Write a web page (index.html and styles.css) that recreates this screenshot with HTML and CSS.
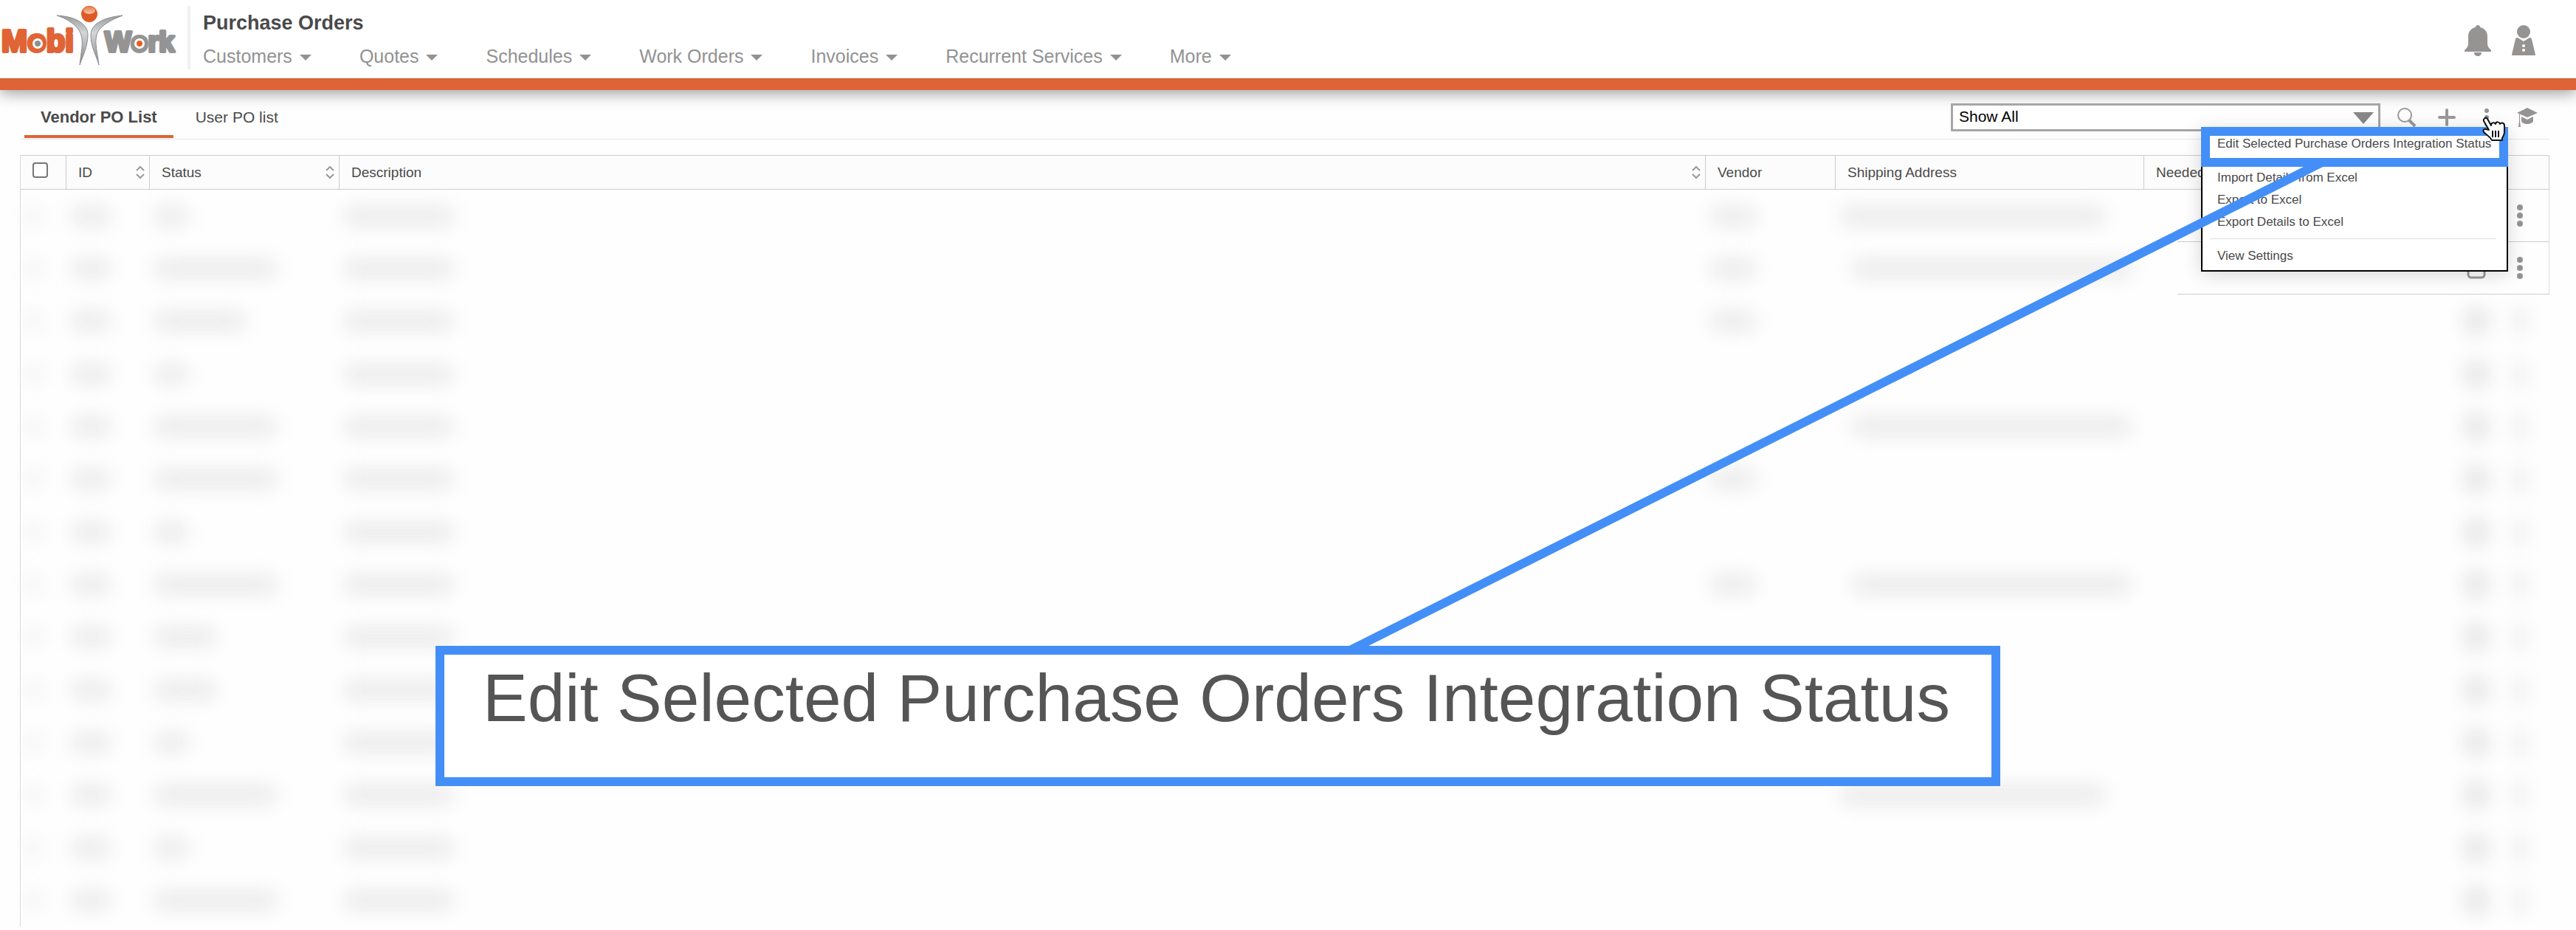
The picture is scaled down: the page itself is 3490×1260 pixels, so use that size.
FILE: index.html
```html
<!DOCTYPE html>
<html lang="en">
<head>
    <meta charset="UTF-8">
    <meta name="viewport" content="width=device-width, initial-scale=1.0">
    <title>Purchase Orders</title>
    <link rel="stylesheet" href="styles.css">
</head>
<body>
    <header class="header">
        <a class="logo" href="#" aria-label="MobiWork">
            <svg width="240" height="92" viewBox="0 0 240 92">
                <defs>
                    <linearGradient id="arm" x1="0" y1="0" x2="0" y2="1">
                        <stop offset="0" stop-color="#9a9a9a"/>
                        <stop offset="0.35" stop-color="#d4d6d8"/>
                        <stop offset="1" stop-color="#85888b"/>
                    </linearGradient>
                    <linearGradient id="shine" x1="0" y1="0" x2="0" y2="1">
                        <stop offset="0" stop-color="#e8814f"/>
                        <stop offset="1" stop-color="#f6c6a6"/>
                    </linearGradient>
                </defs>
                <text class="logo-mobi" x="2" y="70">Mobi</text>
                <text class="logo-work" x="142" y="70">Work</text>
                <circle cx="51" cy="59" r="7" fill="#fff"/>
                <circle cx="51" cy="59" r="4" fill="#8f8f8f"/>
                <circle cx="189" cy="59" r="7" fill="#fff"/>
                <circle cx="189" cy="59" r="4" fill="#e8601f"/>
                <path d="M77 21C98 22 119 30 119 47C119 63 112 76 108 88C110 70 113 58 110 48C107 36 93 26 77 21Z" fill="url(#arm)" stroke="#8a8c8e"/>
                <path d="M166 21C145 23 123 30 123 48C123 64 131 76 134 88C132 72 128 58 131 47C134 36 150 27 166 21Z" fill="url(#arm)" stroke="#8a8c8e"/>
                <circle cx="121" cy="19" r="11" fill="#dd5a26"/>
                <ellipse cx="121" cy="14" rx="8" ry="5" fill="url(#shine)"/>
            </svg>
        </a>
        <div class="header-main">
            <h1>Purchase Orders</h1>
            <nav class="menu">
                <a href="#">Customers</a>
                <a href="#">Quotes</a>
                <a href="#">Schedules</a>
                <a href="#">Work Orders</a>
                <a href="#">Invoices</a>
                <a href="#">Recurrent Services</a>
                <a href="#">More</a>
            </nav>
        </div>
        <div class="header-icons">
            <button class="icon-button" aria-label="Notifications">
                <svg width="36" height="42" viewBox="0 0 36 42">
                    <path d="M18 0a3 3 0 0 1 3 3c6 1 10 6 10 12v10c0 4 2 6 5 9v2H0v-2c3-3 5-5 5-9V15C5 9 9 4 15 3a3 3 0 0 1 3-3z"/>
                    <path d="M13 37h10c0 3-2 5-5 5s-5-2-5-5z"/>
                </svg>
            </button>
            <button class="icon-button" aria-label="Account">
                <svg width="32" height="42" viewBox="0 0 32 42">
                    <circle cx="16" cy="9" r="9"/>
                    <path d="M8 17l8 5 8-5c2 0 3 1 3 2l5 21c0 1 0 1-1 1H1c-1 0-1 0-1-1l5-21c0-1 1-2 3-2z"/>
                    <circle cx="16" cy="28" r="2" fill="#fff"/>
                    <circle cx="16" cy="34" r="2" fill="#fff"/>
                </svg>
            </button>
        </div>
    </header>

    <main class="container">
        <div class="toolbar">
            <div class="tabs">
                <a class="tab active" href="#">Vendor PO List</a>
                <a class="tab" href="#">User PO list</a>
            </div>
            <div class="tools">
                <div class="filter">
                    <select aria-label="Filter">
                        <option>Show All</option>
                    </select>
                    <svg class="filter-arrow" width="28" height="16" viewBox="0 0 28 16"><path d="M0 0h28L14 16z"/></svg>
                </div>
                <button class="icon-button" aria-label="Search">
                    <svg width="28" height="28" viewBox="0 0 28 28">
                        <circle cx="11" cy="11" r="9" fill="none" stroke="#999" stroke-width="2"/>
                        <path d="M17 18l8 8" stroke="#999" stroke-width="4"/>
                    </svg>
                </button>
                <button class="icon-button" aria-label="Add">
                    <svg width="24" height="24" viewBox="0 0 24 24"><path d="M12 2v20M2 12h20" stroke="#999" stroke-width="4" stroke-linecap="round"/></svg>
                </button>
                <div class="more">
                    <button class="icon-button" aria-label="More actions">
                        <svg width="8" height="26" viewBox="0 0 8 26"><circle cx="4" cy="4" r="3"/><circle cx="4" cy="13" r="3"/><circle cx="4" cy="22" r="3"/></svg>
                    </button>
                    <div class="dropdown">
                        <a href="#" class="selected">Edit Selected Purchase Orders Integration Status</a>
                        <a href="#">Import Details from Excel</a>
                        <a href="#">Export to Excel</a>
                        <a href="#">Export Details to Excel</a>
                        <hr>
                        <a href="#">View Settings</a>
                    </div>
                </div>
                <button class="icon-button" aria-label="Training">
                    <svg width="30" height="28" viewBox="0 0 30 28">
                        <path d="M15 1L29 8l-14 6L1 8z"/>
                        <path d="M7 13l8 4 8-4v6c0 2-4 4-8 4s-8-2-8-4z"/>
                        <path d="M5 10v9l1 8H3l1-8V9z"/>
                    </svg>
                </button>
            </div>
        </div>

        <table class="orders">
            <colgroup>
                <col class="col-check">
                <col class="col-id">
                <col class="col-status">
                <col>
                <col class="col-vendor">
                <col class="col-address">
                <col class="col-needed">
                <col class="col-select">
                <col class="col-actions">
            </colgroup>
            <thead>
                <tr>
                    <th><input type="checkbox" aria-label="Select all"></th>
                    <th class="sortable">ID</th>
                    <th class="sortable">Status</th>
                    <th class="sortable">Description</th>
                    <th>Vendor</th>
                    <th>Shipping Address</th>
                    <th class="plain">Needed</th>
                    <th class="plain"></th>
                    <th class="plain"></th>
                </tr>
            </thead>
            <tbody id="orderRows"></tbody>
        </table>
    </main>

    <svg class="pointer-line" viewBox="0 0 3490 1260" preserveAspectRatio="none">
        <path d="M3144 221L1831 880" stroke="#438ff7" stroke-width="12"/>
    </svg>
    <div class="callout">Edit Selected Purchase Orders Integration Status</div>
    <svg class="cursor" width="32" height="34" viewBox="0 0 32 34">
        <path d="M2 6C1 3 5 0 7 3l5 9c0-4 4-5 6-2 1-4 5-3 6 0 2-3 6-1 6 2v9c0 4-2 6-3 8v3H13c-2-5-6-6-10-10-3-3-1-6 2-5l4 1z" fill="#fff" stroke="#111" stroke-width="2" stroke-linejoin="round"/>
        <path d="M14 19v9M18 19v9M22 19v9" stroke="#111" stroke-width="2"/>
    </svg>

    <script>
        // status length, vendor set, address length
        const rows = [
            ['short', true, 'start'],
            ['long', true, 'wide'],
            ['medium', true, ''],
            ['short', false, ''],
            ['long', false, 'wide'],
            ['long', true, ''],
            ['short', false, ''],
            ['long', true, 'wide'],
            ['small', false, ''],
            ['small', false, ''],
            ['short', false, ''],
            ['long', false, 'start'],
            ['short', false, ''],
            ['long', false, '']
        ];

        const box = '<svg width="26" height="30" viewBox="0 0 26 30"><rect x="2" y="2" width="22" height="26" rx="4" fill="none" stroke="#999" stroke-width="3"/></svg>';
        const dots = '<svg width="8" height="30" viewBox="0 0 8 30"><circle cx="4" cy="4" r="4"/><circle cx="4" cy="15" r="4"/><circle cx="4" cy="26" r="4"/></svg>';

        function mask(size) {
            return size ? '<span class="mask ' + size + '"></span>' : '';
        }

        document.getElementById('orderRows').innerHTML = rows.map(function (row, i) {
            const open = i < 2;
            return '<tr class="' + (open ? 'open' : '') + '">' +
                '<td>' + mask('check') + '</td>' +
                '<td>' + mask('id') + '</td>' +
                '<td>' + mask(row[0]) + '</td>' +
                '<td>' + mask('description') + '</td>' +
                '<td>' + mask(row[1] ? 'vendor' : '') + '</td>' +
                '<td>' + mask(row[2]) + '</td>' +
                '<td class="needed"></td>' +
                '<td class="center">' + (open ? '<button class="icon-button" aria-label="Open">' + box + '</button>' : mask('icon')) + '</td>' +
                '<td class="center actions">' + (open ? '<button class="icon-button" aria-label="Row actions">' + dots + '</button>' : mask('dots')) + '</td>' +
                '</tr>';
        }).join('');
    </script>
</body>
</html>
```

FILE: styles.css
```css
* {
    box-sizing: border-box;
}
body {
    font-family: "Liberation Sans", Arial, sans-serif;
    margin: 0;
    min-height: 100vh;
    background-color: #fefefe;
    color: #4a4a4a;
    position: relative;
    overflow-x: hidden;
}
a {
    color: inherit;
    text-decoration: none;
}
.icon-button {
    display: flex;
    padding: 0;
    border: none;
    background: none;
    cursor: pointer;
    fill: #969493;
}
.header {
    display: flex;
    align-items: flex-start;
    height: 122px;
    padding-top: 8px;
    border-bottom: 16px solid #dd6436;
    background-color: #fff;
    box-shadow: 0 4px 20px rgba(0, 0, 0, 0.4);
    position: relative;
}
.logo {
    width: 254px;
    margin-top: -8px;
}
.logo svg {
    display: block;
}
.logo-mobi, .logo-work {
    font-size: 42px;
    font-weight: bold;
    fill: #e06435;
    stroke: #e06435;
    stroke-width: 4px;
    stroke-linejoin: round;
}
.logo-work {
    font-size: 38px;
    fill: #949494;
    stroke: #949494;
}
.header-main {
    flex: 1;
    height: 86px;
    padding-left: 17px;
    border-left: 4px solid #f0f0f0;
}
.header h1 {
    margin: 0 0 12px;
    padding-top: 7px;
    font-size: 27px;
    line-height: 32px;
}
.menu {
    display: flex;
    gap: 65px;
    font-size: 25px;
    line-height: 34px;
    color: #929292;
}
.menu a {
    display: flex;
    align-items: center;
    gap: 10px;
}
.menu a::after {
    content: "";
    margin-top: 4px;
    border: 8px solid transparent;
    border-top-color: #929292;
    border-bottom: none;
}
.header-icons {
    display: flex;
    gap: 28px;
    padding: 26px 55px 0 0;
}
.container {
    padding: 0 36px 0 27px;
}
.toolbar {
    display: flex;
    justify-content: space-between;
    height: 67px;
    margin-bottom: 21px;
    border-bottom: 1px solid #e4e4e4;
    position: relative;
}
.tabs {
    display: flex;
    align-items: flex-end;
    gap: 8px;
    padding-left: 6px;
}
.tab {
    height: 50px;
    padding: 8px 22px 0;
    font-size: 21px;
    line-height: 28px;
    border-bottom: 4px solid transparent;
    margin-bottom: 1px;
}
.tab.active {
    font-size: 22px;
    font-weight: bold;
    border-bottom-color: #dd6436;
}
.tools {
    display: flex;
    align-items: center;
    height: 38px;
    margin-top: 18px;
    padding-right: 15px;
}
.tools > .icon-button {
    margin-left: 28px;
}
.filter {
    width: 582px;
    margin-right: -6px;
    position: relative;
}
.filter select {
    appearance: none;
    display: block;
    width: 100%;
    height: 38px;
    padding: 0 8px 3px;
    border: 3px solid #a6a6a6;
    border-radius: 0;
    background-color: #fff;
    color: #000;
    font-family: inherit;
    font-size: 21px;
}
.filter-arrow {
    position: absolute;
    right: 9px;
    top: 12px;
    fill: #888;
    pointer-events: none;
}
.more {
    margin: 0 8px 0 38px;
    position: relative;
}
.dropdown {
    position: absolute;
    z-index: 2;
    top: 26px;
    right: -25px;
    width: 416px;
    padding-bottom: 4px;
    border: 2px solid #000;
    background-color: #fff;
    box-shadow: 0 4px 24px rgba(0, 0, 0, 0.16);
}
.dropdown a {
    display: block;
    padding-left: 20px;
    font-size: 17px;
    line-height: 30px;
    white-space: nowrap;
}
/* highlighted entry covers the frame of the menu */
.dropdown .selected {
    height: 54px;
    margin: -2px -2px 0;
    padding-left: 10px;
    border: 12px solid #438ff7;
    line-height: 22px;
}
.dropdown hr {
    margin: 7px 14px 8px 10px;
    border: none;
    border-top: 1px solid #ddd;
}
.orders {
    width: 100%;
    table-layout: fixed;
    border-collapse: separate;
    border-spacing: 0;
    border-left: 1px solid #d8d8d8;
}
.col-check {
    width: 62px;
}
.col-id {
    width: 113px;
}
.col-status {
    width: 257px;
}
.col-vendor {
    width: 176px;
}
.col-address {
    width: 418px;
}
.col-needed {
    width: 410px;
}
.col-select {
    width: 79px;
}
.col-actions {
    width: 60px;
}
.orders th {
    height: 47px;
    padding: 0 16px;
    border: 1px solid #ccc;
    border-left: none;
    background-color: #fcfcfc;
    font-size: 19px;
    font-weight: normal;
    text-align: left;
}
.orders th.plain:not(:last-child) {
    border-right: none;
}
.orders th.sortable {
    background-image: url("data:image/svg+xml,%3Csvg xmlns='http://www.w3.org/2000/svg' width='12' height='18' viewBox='0 0 12 18' fill='none' stroke='%23999' stroke-width='2'%3E%3Cpath d='M1 6l5-5 5 5M1 11l5 5 5-5'/%3E%3C/svg%3E");
    background-repeat: no-repeat;
    background-position: right 6px center;
}
.orders input {
    appearance: none;
    display: block;
    width: 21px;
    height: 21px;
    margin: 0 0 6px;
    border: 2px solid #777;
    border-radius: 4px;
    background-color: #fff;
}
.orders td {
    height: 71px;
    padding: 0 8px;
}
.orders tr:nth-child(3n) td {
    height: 72px;
}
.orders .open td:last-child {
    border-right: 1px solid #ddd;
}
.orders .center .icon-button,
.orders .center .mask {
    margin: 0 auto;
}
.orders .actions {
    padding-right: 28px;
}
.open .needed {
    position: relative;
}
.open .needed::after {
    content: "";
    position: absolute;
    left: 45px;
    right: 0;
    bottom: 0;
    border-bottom: 1px solid #ccc;
}
.open .center {
    border-bottom: 1px solid #ccc;
}
/* blurred out cell values */
.mask {
    display: block;
    height: 24px;
    background-color: #e9e9e9;
    filter: blur(13px);
}
.mask.check {
    width: 20px;
    background-color: #f2f2f2;
}
.mask.id {
    width: 50px;
}
.mask.short {
    width: 42px;
}
.mask.small {
    width: 80px;
}
.mask.medium {
    width: 120px;
}
.mask.long {
    width: 162px;
}
.mask.description {
    width: 144px;
}
.mask.vendor {
    width: 58px;
}
.mask.start {
    width: 356px;
}
.mask.wide {
    width: 375px;
    margin-left: 16px;
}
.mask.icon {
    width: 30px;
    height: 34px;
    background-color: #e4e4e4;
}
.mask.dots {
    width: 14px;
    height: 34px;
}
.pointer-line {
    position: absolute;
    z-index: 3;
    left: 0;
    top: 0;
    width: 100%;
    height: 1260px;
    pointer-events: none;
}
.callout {
    position: absolute;
    z-index: 4;
    left: 590px;
    top: 875px;
    width: 2120px;
    height: 190px;
    padding-left: 52px;
    border: 12px solid #438ff7;
    background-color: #fff;
    color: #555;
    font-size: 91px;
    line-height: 118px;
    white-space: nowrap;
}
.cursor {
    position: absolute;
    z-index: 5;
    right: 95px;
    top: 158px;
}
```
